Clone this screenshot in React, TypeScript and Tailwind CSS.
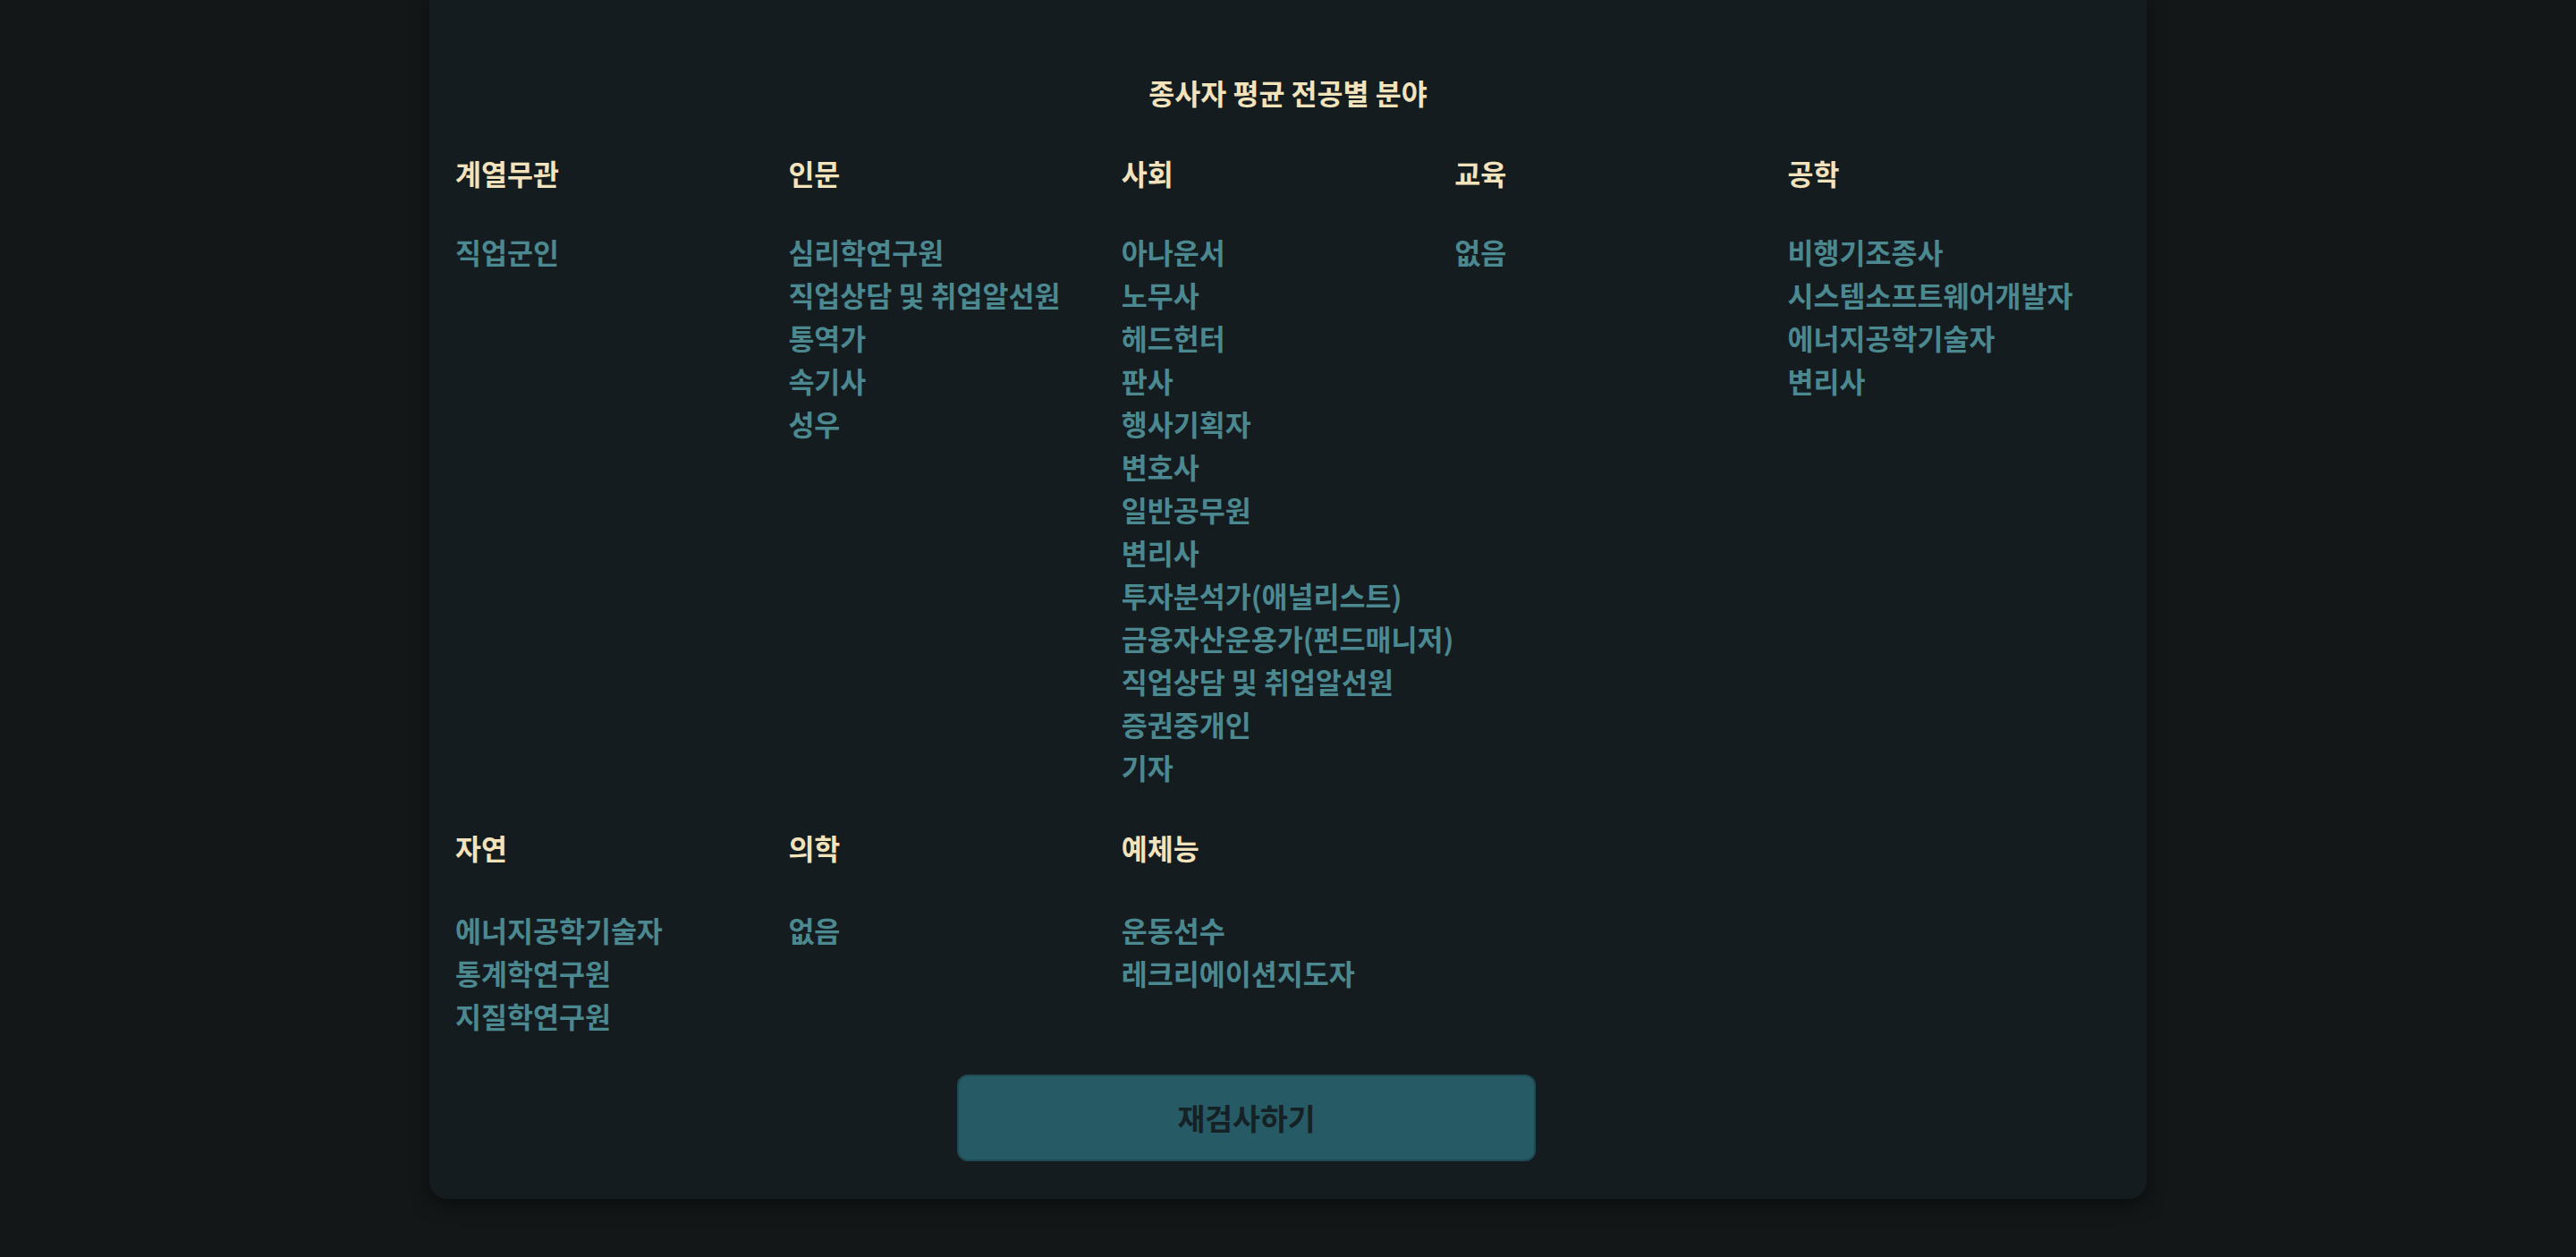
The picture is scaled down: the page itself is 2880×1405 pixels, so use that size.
const MAJORS: { title: string; jobs: string[] }[] = [
  { title: '계열무관', jobs: ['직업군인'] },
  {
    title: '인문',
    jobs: ['심리학연구원', '직업상담 및 취업알선원', '통역가', '속기사', '성우'],
  },
  {
    title: '사회',
    jobs: [
      '아나운서',
      '노무사',
      '헤드헌터',
      '판사',
      '행사기획자',
      '변호사',
      '일반공무원',
      '변리사',
      '투자분석가(애널리스트)',
      '금융자산운용가(펀드매니저)',
      '직업상담 및 취업알선원',
      '증권중개인',
      '기자',
    ],
  },
  { title: '교육', jobs: ['없음'] },
  {
    title: '공학',
    jobs: ['비행기조종사', '시스템소프트웨어개발자', '에너지공학기술자', '변리사'],
  },
  { title: '자연', jobs: ['에너지공학기술자', '통계학연구원', '지질학연구원'] },
  { title: '의학', jobs: ['없음'] },
  { title: '예체능', jobs: ['운동선수', '레크리에이션지도자'] },
];

const MajorColumn = ({
  title,
  jobs,
  secondRow,
}: {
  title: string;
  jobs: string[];
  secondRow: boolean;
}) => (
  <div className="flex flex-col">
    <h3
      className={`text-[31.5px] font-bold leading-[48px] text-[#f3e3bd] ${
        secondRow ? 'mb-[44px]' : 'mb-[40px]'
      }`}
    >
      {title}
    </h3>
    <ul className="flex flex-col">
      {jobs.map((job, i) => (
        <li
          key={i}
          className="whitespace-nowrap text-[31.5px] font-semibold leading-[48px] text-[#4b8890]"
        >
          {job}
        </li>
      ))}
    </ul>
  </div>
);

export default function App() {
  return (
    <div className="min-h-screen bg-[#131718] font-['Noto_Sans_CJK_KR','Noto_Sans',sans-serif]">
      <section className="mx-auto w-[1920px] rounded-b-[20px] bg-[#151c1f] px-[29px] pb-[42px] pt-[79px] shadow-[0_6px_22px_rgba(0,0,0,0.45)]">
        <h2 className="text-center text-[31.5px] font-bold leading-[48px] text-[#f3e3bd]">
          종사자 평균 전공별 분야
        </h2>

        {/* Major grid */}
        <div className="mt-[42px] grid grid-cols-5 gap-y-[42px]">
          {MAJORS.map((m, i) => (
            <MajorColumn key={m.title} title={m.title} jobs={m.jobs} secondRow={i >= 5} />
          ))}
        </div>

        <button
          type="button"
          className="ml-[561px] mt-[42px] flex h-[97px] w-[647px] items-center justify-center rounded-[12px] border-2 border-[#1f4a53] bg-[#265a64] text-[33.5px] font-bold text-[#152124]"
        >
          재검사하기
        </button>
      </section>
    </div>
  );
}
